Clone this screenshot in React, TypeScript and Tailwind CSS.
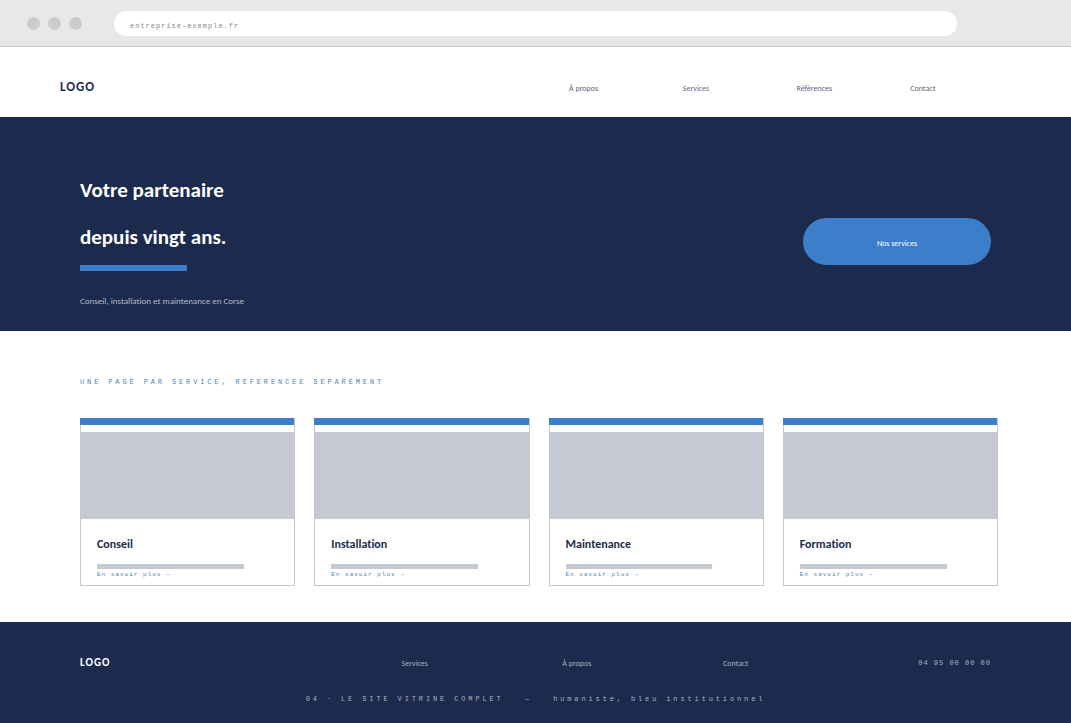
const services = ["Conseil", "Installation", "Maintenance", "Formation"];
const navLinks = ["À propos", "Services", "Références", "Contact"];

const mono = "font-['Liberation_Mono',monospace]";

function BrowserBar() {
  return (
    <div className="flex h-[47px] items-center border-b border-[#c8c8c8] bg-[#e8e8e8] pl-[27px]">
      <div className="flex gap-2" aria-hidden="true">
        <span className="size-[13px] rounded-full bg-[#cccccc]" />
        <span className="size-[13px] rounded-full bg-[#cccccc]" />
        <span className="size-[13px] rounded-full bg-[#cccccc]" />
      </div>
      <input
        type="text"
        aria-label="Adresse"
        defaultValue="entreprise-exemple.fr"
        className={`${mono} mr-[114px] ml-8 h-[25px] min-w-0 flex-1 rounded-full bg-white px-4 pt-[5px] text-[7px] tracking-[1px] text-[#888888] outline-none`}
      />
    </div>
  );
}

function Header() {
  return (
    <header className="flex h-[70px] items-center pt-[9px] pr-[47px] pl-[60px]">
      <a href="#" className="flex-1 text-[13px] leading-4 font-bold tracking-[1px] text-[#1c2b4d]">
        LOGO
      </a>
      <nav className="grid w-[455px] grid-cols-4 pt-[3px] text-[8px] leading-3 text-[#5c667a]">
        {navLinks.map((label) => (
          <a key={label} href="#">
            {label}
          </a>
        ))}
      </nav>
    </header>
  );
}

function Hero() {
  return (
    <section className="flex h-[214px] items-start justify-between bg-[#1c2b4d] px-20">
      <div className="pt-[50px]">
        <h1 className="text-[21px] leading-[47px] font-bold text-white">
          Votre partenaire
          <br />
          depuis vingt ans.
        </h1>
        <div className="mt-1 h-[6px] w-[107px] bg-[#3d7ecb]" />
        <p className="mt-6 text-[9px] leading-3 text-[#b4bac6]">
          Conseil, installation et maintenance en Corse
        </p>
      </div>
      <button
        type="button"
        className="mt-[101px] h-[47px] w-[188px] rounded-full bg-[#3d7ecb] pt-[3px] text-[8px] text-white"
      >
        Nos services
      </button>
    </section>
  );
}

function ServiceCard({ title }: { title: string }) {
  return (
    <article className="border border-t-0 border-[#c4c8ce]">
      <div className="-ml-px h-[7px] bg-[#3d7ecb]" />
      <div className="mt-[7px] h-[87px] bg-[#c5c9d4]" />
      <div className="px-4 pt-[17px] pb-[5px]">
        <h2 className="text-[12px] leading-4 font-bold text-[#1c2b4d]">{title}</h2>
        <div className="mt-3 h-[5px] w-[81%] bg-[#c5c9d4]" />
        <a href="#" className={`${mono} block pt-px text-[6px] leading-[10px] tracking-[1px] text-[#4a83b8]`}>
          En savoir plus →
        </a>
      </div>
    </article>
  );
}

function Footer() {
  return (
    <footer className="flex-1 bg-[#1c2b4d] px-20 pt-[33px] pb-4">
      <div className="grid grid-cols-[6fr_3fr_3fr_5fr] items-center text-[8px] leading-4 text-[#a9b1c0]">
        <a href="#" className="text-[11px] font-bold tracking-[1px] text-white">
          LOGO
        </a>
        <a href="#">Services</a>
        <a href="#">À propos</a>
        <div className="flex items-center justify-between">
          <a href="#">Contact</a>
          <a href="tel:0495000000" className={`${mono} text-[7px] tracking-[1px]`}>
            04 95 00 00 00
          </a>
        </div>
      </div>
      <p className={`${mono} mt-5 text-center text-[7px] leading-4 tracking-[0.41em] whitespace-pre text-[#a9b1c0]`}>
        {"04 · LE SITE VITRINE COMPLET   —   humaniste, bleu institutionnel"}
      </p>
    </footer>
  );
}

export default function App() {
  return (
    <div className="flex min-h-screen flex-col bg-white font-['Carlito','Lato',sans-serif] [font-variant-ligatures:none]">
      <BrowserBar />
      <Header />
      <main>
        <Hero />
        <section className="pt-[43px] pr-[73px] pb-9 pl-20">
          <p className={`${mono} text-[7px] leading-4 tracking-[0.41em] text-[#4a83b8]`}>
            UNE PAGE PAR SERVICE, RÉFÉRENCÉE SÉPARÉMENT
          </p>
          <div className="mt-7 grid grid-cols-4 gap-[19px]">
            {services.map((title) => (
              <ServiceCard key={title} title={title} />
            ))}
          </div>
        </section>
      </main>
      <Footer />
    </div>
  );
}
